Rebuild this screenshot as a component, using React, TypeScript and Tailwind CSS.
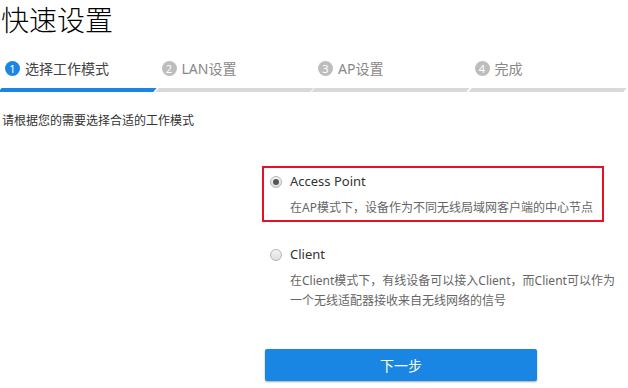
import React from 'react';

const steps = [
  { n: 1, label: '选择工作模式', active: true },
  { n: 2, label: 'LAN设置', active: false },
  { n: 3, label: 'AP设置', active: false },
  { n: 4, label: '完成', active: false },
];

const Radio = ({ checked }: { checked: boolean }) => (
  <span className="flex h-[12px] w-[12px] shrink-0 items-center justify-center rounded-full border border-[#b5b5b5] bg-gradient-to-b from-[#f4f4f4] to-[#dedede]">
    {checked && <span className="h-[6px] w-[6px] rounded-full bg-[#555]" />}
  </span>
);

export default function App() {
  return (
    <div className="h-[388px] w-[628px] overflow-hidden bg-white font-['Noto_Sans','Noto_Sans_CJK_SC',sans-serif] text-[#333]">
      <h1 className="pl-[1px] text-[28px] leading-[40px] font-light text-black">快速设置</h1>

      {/* 步骤条 */}
      <div className="mt-[18px] flex w-[624px] gap-[2px]">
        {steps.map((s) => (
          <div key={s.n} className="flex w-[156px] flex-col">
            <div className="flex h-[20px] items-center gap-[5px] pl-[5px]">
              <span
                className={`flex h-[15px] w-[15px] items-center justify-center rounded-full text-[11px] leading-none text-white ${
                  s.active ? 'bg-[#1a86e4]' : 'bg-[#bdbdbd]'
                }`}
              >
                {s.n}
              </span>
              <span className={`text-[14px] ${s.active ? 'text-[#444]' : 'text-[#888]'}`}>{s.label}</span>
            </div>
            <div className={`mt-[10px] h-[4px] -skew-x-[40deg] ${s.active ? 'bg-[#1a86e4]' : 'bg-[#d9d9d9]'}`} />
          </div>
        ))}
      </div>

      <p className="mt-[20px] pl-[2px] text-[12px] leading-[18px]">请根据您的需要选择合适的工作模式</p>

      {/* 工作模式 */}
      <div className="mt-[36px] ml-[262px] w-[342px] border-2 border-[#e81123] px-[6px] pt-[4px] pb-[2px]">
        <div className="flex h-[20px] items-center gap-[8px]">
          <Radio checked />
          <span className="text-[13px]">Access Point</span>
        </div>
        <p className="mt-[6px] pl-[20px] text-[12px] leading-[20px] text-[#666]">
          在AP模式下，设备作为不同无线局域网客户端的中心节点
        </p>
      </div>

      <div className="mt-[17px] ml-[262px] w-[366px] border-2 border-transparent px-[6px] pt-[4px] pb-[2px]">
        <div className="flex h-[20px] items-center gap-[8px]">
          <Radio checked={false} />
          <span className="text-[13px]">Client</span>
        </div>
        <p className="mt-[6px] pl-[20px] text-[12px] leading-[20px] whitespace-nowrap text-[#666]">
          在Client模式下，有线设备可以接入Client，而Client可以作为
          <br />
          一个无线适配器接收来自无线网络的信号
        </p>
      </div>

      <button className="mt-[34px] ml-[265px] flex h-[32px] w-[272px] items-center justify-center rounded-[2px] bg-[#1a86e4] text-[14px] text-white shadow-[0_1px_2px_rgba(0,0,0,0.35)]">
        下一步
      </button>
    </div>
  );
}
